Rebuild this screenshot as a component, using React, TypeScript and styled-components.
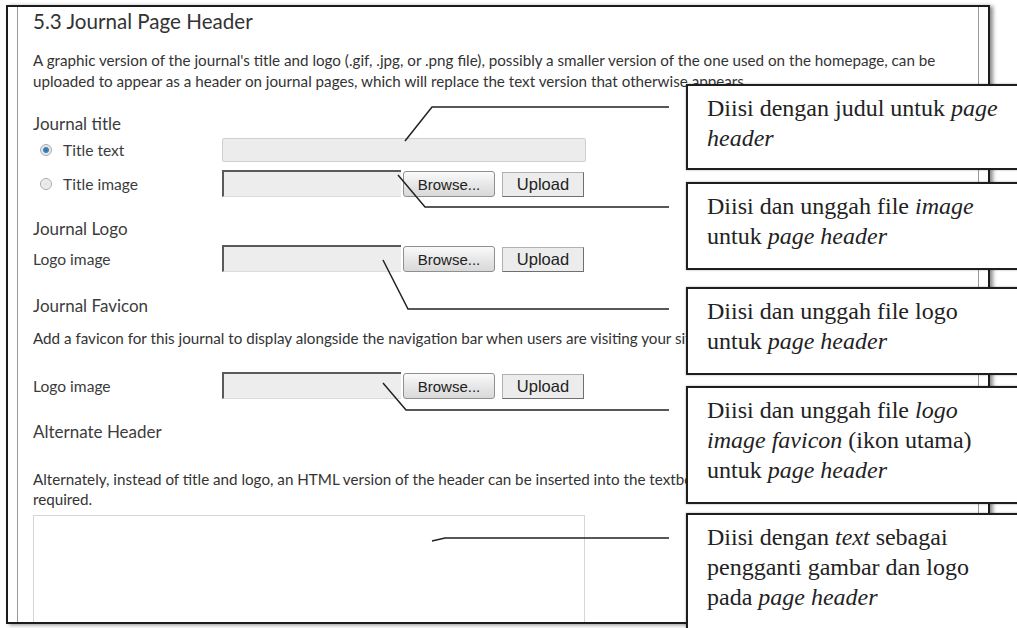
import * as React from 'react';
import styled, { createGlobalStyle } from 'styled-components';

const GlobalStyle = createGlobalStyle`
  html, body {
    margin: 0;
    padding: 0;
    background: #fff;
  }
  body {
    font-family: Lato, "Open Sans", sans-serif;
  }
`;

const Page = styled.div`
  position: relative;
  width: 1017px;
  height: 628px;
  overflow: hidden;
  background: #fff;
`;

const Frame = styled.div`
  box-sizing: border-box;
  margin: 5px 0 0 6px;
  width: 984px;
  height: 619px;
  border: 2px solid #1c1c1c;
  box-shadow: 3px 1px 4px rgba(0, 0, 0, 0.45);
  padding: 0 9px;
`;

const Sheet = styled.div`
  box-sizing: border-box;
  height: 100%;
  border-left: 1px solid #9a9a9a;
  border-right: 1px solid #9a9a9a;
  padding: 2px 0 0 15px;
  overflow: hidden;
  color: #3a3a3a;
`;

const Title = styled.h2`
  margin: 0;
  font-size: 20.6px;
  line-height: 24px;
  font-weight: 400;
  color: #333;
`;

const Para = styled.p<{ $top: number; $lh?: number }>`
  margin: ${(p) => p.$top}px 0 0;
  font-size: 15.2px;
  line-height: ${(p) => p.$lh ?? 21}px;
  white-space: nowrap;
  color: #333;
`;

const Section = styled.h3<{ $top: number }>`
  margin: ${(p) => p.$top}px 0 0;
  font-size: 17px;
  line-height: 20px;
  font-weight: 400;
  color: #3c3c3c;
`;

const Row = styled.div<{ $top: number; $h: number }>`
  display: grid;
  grid-template-columns: 189px auto;
  align-items: center;
  height: ${(p) => p.$h}px;
  margin-top: ${(p) => p.$top}px;
`;

const Label = styled.label`
  display: flex;
  align-items: center;
  gap: 11px;
  font-size: 15.6px;
  line-height: 20px;
  color: #3c3c3c;
`;

const Radio = styled.span<{ $on?: boolean }>`
  box-sizing: border-box;
  width: 12px;
  height: 12px;
  margin-left: 7px;
  border-radius: 50%;
  border: 1px solid #a9a9a9;
  background: ${(p) =>
    p.$on
      ? 'radial-gradient(circle, #2a6fa8 0, #3f86c0 2.5px, #e4e4e4 3.5px, #f7f7f7 100%)'
      : 'radial-gradient(circle, #e2e2e2 0, #f6f6f6 100%)'};
`;

const TextBox = styled.div`
  box-sizing: border-box;
  width: 364px;
  height: 24px;
  background: #ececec;
  border: 1px solid #cfcfcf;
  border-radius: 2px;
`;

const FileGroup = styled.div`
  display: flex;
  align-items: stretch;
  height: 100%;
`;

const FileBox = styled.div`
  box-sizing: border-box;
  width: 179px;
  background: #ededed;
  border-top: 2px solid #5a5a5a;
  border-left: 2px solid #5a5a5a;
  border-bottom: 1px solid #dcdcdc;
`;

const Button = styled.div<{ $w: number; $browse?: boolean }>`
  box-sizing: border-box;
  display: flex;
  align-items: center;
  justify-content: center;
  width: ${(p) => p.$w}px;
  margin-left: ${(p) => (p.$browse ? 2 : 7)}px;
  margin-top: ${(p) => (p.$browse ? 1 : 2)}px;
  font-family: "Liberation Sans", Arial, sans-serif;
  font-size: ${(p) => (p.$browse ? 15 : 16.5)}px;
  color: #222;
  border: 1px solid ${(p) => (p.$browse ? '#8f8f8f' : '#b0b0b0')};
  border-right-color: ${(p) => (p.$browse ? '#8f8f8f' : '#6f6f6f')};
  border-bottom-color: ${(p) => (p.$browse ? '#8f8f8f' : '#6f6f6f')};
  border-radius: ${(p) => (p.$browse ? 3 : 0)}px;
  background: ${(p) =>
    p.$browse ? 'linear-gradient(#fafafa, #e6e6e6 55%, #d9d9d9)' : '#ececec'};
`;

const TextArea = styled.div`
  box-sizing: border-box;
  margin-top: 6px;
  width: 552px;
  height: 130px;
  border: 1px solid #d6d6d6;
  background: #fff;
`;

const Leaders = styled.svg`
  position: absolute;
  left: 0;
  top: 0;
  pointer-events: none;
`;

const Callout = styled.div<{ $top: number; $h: number }>`
  position: absolute;
  left: 686px;
  top: ${(p) => p.$top}px;
  width: 350px;
  height: ${(p) => p.$h}px;
  box-sizing: border-box;
  border: 2px solid #1e1e1e;
  background: #fff;
  padding: 7px 0 0 19px;
  font-family: "Liberation Serif", "Times New Roman", serif;
  font-size: 24px;
  line-height: 30px;
  color: #222;
  white-space: nowrap;
  box-shadow: 0 0 2px rgba(0, 0, 0, 0.35);

  em {
    font-style: italic;
  }
`;

function FileRow({ label, top }: { label: string; top: number }) {
  return (
    <Row $top={top} $h={27}>
      <Label>{label}</Label>
      <FileGroup>
        <FileBox />
        <Button $browse $w={92}>Browse...</Button>
        <Button $w={82}>Upload</Button>
      </FileGroup>
    </Row>
  );
}

export default function App() {
  return (
    <Page>
      <GlobalStyle />
      <Frame>
        <Sheet>
          <Title>5.3 Journal Page Header</Title>
          <Para $top={17}>
            A graphic version of the journal's title and logo (.gif, .jpg, or .png file), possibly a smaller version of the one used on the homepage, can be
            <br />
            uploaded to appear as a header on journal pages, which will replace the text version that otherwise appears.
          </Para>
          <Section $top={22}>Journal title</Section>
          <Row $top={4} $h={24}>
            <Label>
              <Radio $on />
              Title text
            </Label>
            <TextBox />
          </Row>
          <Row $top={8} $h={27}>
            <Label>
              <Radio />
              Title image
            </Label>
            <FileGroup>
              <FileBox />
              <Button $browse $w={92}>Browse...</Button>
              <Button $w={82}>Upload</Button>
            </FileGroup>
          </Row>
          <Section $top={22}>Journal Logo</Section>
          <FileRow label="Logo image" top={6} />
          <Section $top={24}>Journal Favicon</Section>
          <Para $top={12}>
            Add a favicon for this journal to display alongside the navigation bar when users are visiting your site.
          </Para>
          <FileRow label="Logo image" top={23} />
          <Section $top={23}>Alternate Header</Section>
          <Para $top={27} $lh={20}>
            Alternately, instead of title and logo, an HTML version of the header can be inserted into the textbox below. Leave the textbox blank if not
            <br />
            required.
          </Para>
          <TextArea />
        </Sheet>
      </Frame>

      <Leaders width={1017} height={628} viewBox="0 0 1017 628">
        <g fill="none" stroke="#222" strokeWidth={1.5}>
          <path d="M669 107 H432 L405 141" />
          <path d="M398 175 L425 207 H669" />
          <path d="M383 260 L408 309 H669" />
          <path d="M383 383 L406 410 H669" />
          <path d="M432 541 L445 538 H669" />
        </g>
      </Leaders>

      <Callout $top={84} $h={86}>
        Diisi dengan judul untuk <em>page</em>
        <br />
        <em>header</em>
      </Callout>
      <Callout $top={182} $h={88}>
        Diisi dan unggah file <em>image</em>
        <br />
        untuk <em>page header</em>
      </Callout>
      <Callout $top={287} $h={88}>
        Diisi dan unggah file logo
        <br />
        untuk <em>page header</em>
      </Callout>
      <Callout $top={386} $h={118}>
        Diisi dan unggah file <em>logo</em>
        <br />
        <em>image favicon</em> (ikon utama)
        <br />
        untuk <em>page header</em>
      </Callout>
      <Callout $top={513} $h={130}>
        Diisi dengan <em>text</em> sebagai
        <br />
        pengganti gambar dan logo
        <br />
        pada <em>page header</em>
      </Callout>
    </Page>
  );
}
